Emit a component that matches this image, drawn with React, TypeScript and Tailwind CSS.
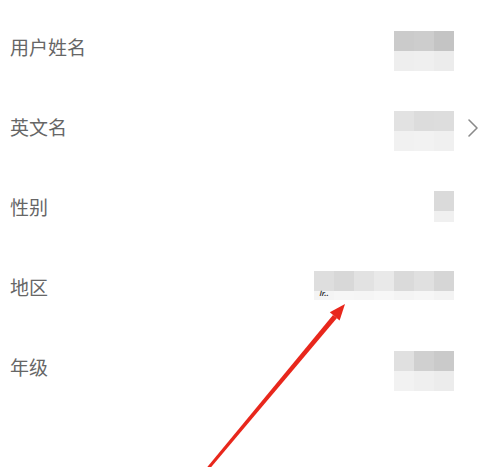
import { ChevronRight } from "lucide-react"

type Cell = { top: string[]; bottom: string[]; bottomH?: number }

const rows: { label: string; cells: Cell; trail?: boolean; note?: string }[] = [
  {
    label: "用户姓名",
    cells: {
      top: ["#cbcbcb", "#cdcdcd", "#c4c4c4"],
      bottom: ["#eeeeee", "#efefef", "#ececec"],
    },
  },
  {
    label: "英文名",
    cells: {
      top: ["#e2e2e2", "#dcdcdc", "#dddddd"],
      bottom: ["#f1f1f1", "#f2f2f2", "#f0f0f0"],
    },
    trail: true,
  },
  {
    label: "性别",
    cells: { top: ["#dadada"], bottom: ["#f0f0f0"], bottomH: 11 },
  },
  {
    label: "地区",
    cells: {
      top: ["#dedede", "#d8d8d8", "#e2e2e2", "#e9e9e9", "#dadada", "#e0e0e0", "#d6d6d6"],
      bottom: ["#f4f4f4", "#f6f6f6", "#f5f5f5", "#f7f7f7", "#f4f4f4", "#f6f6f6", "#f3f3f3"],
      bottomH: 9,
    },
    note: "Ir..",
  },
  {
    label: "年级",
    cells: {
      top: ["#e0e0e0", "#d0d0d0", "#cacaca"],
      bottom: ["#f2f2f2", "#efefef", "#ececec"],
    },
  },
]

const Mosaic = ({ cells, note }: { cells: Cell; note?: string }) => (
  <div className="relative flex flex-col">
    <div className="flex">
      {cells.top.map((c, i) => (
        <div key={i} className="h-[20px] w-[20px]" style={{ backgroundColor: c }} />
      ))}
    </div>
    <div className="flex">
      {cells.bottom.map((c, i) => (
        <div
          key={i}
          className="w-[20px]"
          style={{ backgroundColor: c, height: cells.bottomH ?? 20 }}
        />
      ))}
    </div>
    {note && (
      <span className="absolute left-[5px] top-[19px] text-[7px] font-bold italic leading-none text-[#333]">
        {note}
      </span>
    )}
  </div>
)

export default function App() {
  return (
    <div
      className="relative h-[467px] w-[493px] overflow-hidden bg-white pt-[8px]"
      style={{ fontFamily: '"Noto Sans CJK SC", "Noto Sans", sans-serif' }}
    >
      {rows.map((row) => (
        <div key={row.label} className="flex h-[80px] items-center pl-[10px]">
          <span className="-mt-[4px] flex-1 text-[19px] leading-none text-[#666]">
            {row.label}
          </span>
          <div className="mt-[7px] self-start pt-[16px]">
            <Mosaic cells={row.cells} note={row.note} />
          </div>
          <div className="flex w-[39px] items-center pl-[3px]">
            {row.trail && (
              <ChevronRight className="text-[#8a8a8a]" size={32} strokeWidth={1.2} />
            )}
          </div>
        </div>
      ))}

      <svg className="pointer-events-none absolute left-0 top-0" width="493" height="467">
        <polygon points="204,471 207,472 337,318 333,315" fill="#e8271c" />
        <polygon points="345,304 339.6,320.5 329.8,312.2" fill="#e8271c" />
      </svg>
    </div>
  )
}
